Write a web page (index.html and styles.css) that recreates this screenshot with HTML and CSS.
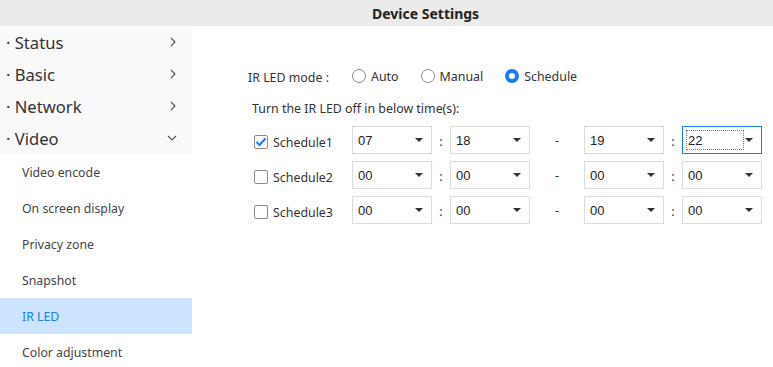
FILE: index.html
```html
<!DOCTYPE html>
<html>
<head>
<meta charset="utf-8">
<link rel="stylesheet" href="styles.css">
</head>
<body>
<div class="header"><span class="title">Device Settings</span></div>
<div class="main">
  <nav class="sidebar">
    <div class="group">
      <div class="top"><span>· Status</span><svg class="chev" width="10" height="12" viewBox="0 0 10 12"><path d="M3 2 L7 6 L3 10" fill="none" stroke="#555" stroke-width="1.2"/></svg></div>
      <div class="top"><span>· Basic</span><svg class="chev" width="10" height="12" viewBox="0 0 10 12"><path d="M3 2 L7 6 L3 10" fill="none" stroke="#555" stroke-width="1.2"/></svg></div>
      <div class="top"><span>· Network</span><svg class="chev" width="10" height="12" viewBox="0 0 10 12"><path d="M3 2 L7 6 L3 10" fill="none" stroke="#555" stroke-width="1.2"/></svg></div>
      <div class="top"><span>· Video</span><svg class="chev" width="12" height="10" viewBox="0 0 12 10"><path d="M2 3 L6 7 L10 3" fill="none" stroke="#555" stroke-width="1.2"/></svg></div>
    </div>
    <div class="sub">Video encode</div>
    <div class="sub">On screen display</div>
    <div class="sub">Privacy zone</div>
    <div class="sub">Snapshot</div>
    <div class="sub active">IR LED</div>
    <div class="sub">Color adjustment</div>
  </nav>
  <section class="content">
    <div class="moderow">
      <span class="modelabel">IR LED mode :</span>
      <label class="radio"><span class="circle"></span>Auto</label>
      <label class="radio"><span class="circle"></span>Manual</label>
      <label class="radio"><span class="circle on"></span>Schedule</label>
    </div>
    <div class="hint">Turn the IR LED off in below time(s):</div>
    <div class="rows">
      <div class="row">
        <label class="check"><span class="box"><svg width="12" height="10" viewBox="0 0 12 10"><path d="M1.5 5 L4.5 8 L10.5 1.5" fill="none" stroke="#1a7cf0" stroke-width="2"/></svg></span>Schedule1</label>
        <div class="sel"><span>07</span><i class="arr"></i></div><span class="colon">:</span>
        <div class="sel"><span>18</span><i class="arr"></i></div><span class="dash">-</span>
        <div class="sel"><span>19</span><i class="arr"></i></div><span class="colon">:</span>
        <div class="sel focus"><span class="focustext">22</span><i class="arr"></i></div>
      </div>
      <div class="row">
        <label class="check"><span class="box"></span>Schedule2</label>
        <div class="sel"><span>00</span><i class="arr"></i></div><span class="colon">:</span>
        <div class="sel"><span>00</span><i class="arr"></i></div><span class="dash">-</span>
        <div class="sel"><span>00</span><i class="arr"></i></div><span class="colon">:</span>
        <div class="sel"><span>00</span><i class="arr"></i></div>
      </div>
      <div class="row">
        <label class="check"><span class="box"></span>Schedule3</label>
        <div class="sel"><span>00</span><i class="arr"></i></div><span class="colon">:</span>
        <div class="sel"><span>00</span><i class="arr"></i></div><span class="dash">-</span>
        <div class="sel"><span>00</span><i class="arr"></i></div><span class="colon">:</span>
        <div class="sel"><span>00</span><i class="arr"></i></div>
      </div>
    </div>
  </section>
</div>
</body>
</html>
```
FILE: styles.css
```css
* { box-sizing: border-box; }
html, body { margin: 0; padding: 0; background: #fff; }
body { font-family: "Noto Sans", "Open Sans", sans-serif; color: #333; width: 773px; height: 367px; overflow: hidden; }
.header { height: 26px; background: #ebebeb; display: flex; align-items: center; padding-left: 372px; }
.title { font-weight: bold; font-size: 14px; color: #222; }
.main { display: flex; }
.sidebar { width: 192px; flex: none; }
.group { background: #fafafa; }
.top { height: 32px; display: flex; align-items: center; justify-content: space-between; padding: 0 14px 0 6px; font-size: 16.6px; color: #333; }
.sub { height: 36px; display: flex; align-items: center; padding-left: 22px; font-size: 12.3px; color: #444; }
.sub.active { background: #cce4fd; color: #1a7cf0; }
.content { flex: 1; padding: 36px 0 0 56px; font-size: 12.4px; color: #333; }
.moderow { display: flex; align-items: center; height: 28px; }
.modelabel { width: 104px; margin-top: 2px; }
.radio { display: flex; align-items: center; margin-right: 22px; }
.circle { width: 14px; height: 14px; border: 1px solid #8a8a8a; border-radius: 50%; margin-right: 5px; background: #fff; }
.circle.on { border: 4px solid #1a7cf0; }
.hint { margin: 10px 0 0 4px; height: 20px; }
.rows { margin-top: 6px; padding-left: 6px; }
.row { display: flex; align-items: center; height: 28px; margin-bottom: 7px; }
.check { display: flex; align-items: center; width: 98px; margin-top: 4px; }
.box { width: 14px; height: 14px; border: 1px solid #8a8a8a; border-radius: 2px; margin-right: 5px; display: flex; align-items: center; justify-content: center; }
.sel { width: 80px; height: 28px; border: 1px solid #dcdcdc; display: flex; align-items: center; justify-content: space-between; padding: 0 8px 0 5px; font-family: "Liberation Sans", Arial, sans-serif; font-size: 13px; color: #222; }
.sel.focus { border-color: #1a7cf0; padding-left: 3px; }
.focustext { border: 1px dotted #777; width: 58px; height: 20px; display: flex; align-items: center; padding-left: 1px; }
.arr { width: 0; height: 0; border-left: 4px solid transparent; border-right: 4px solid transparent; border-top: 4px solid #333; }
.colon { width: 18px; text-align: center; margin-top: 3px; }
.dash { width: 54px; text-align: center; }
```
